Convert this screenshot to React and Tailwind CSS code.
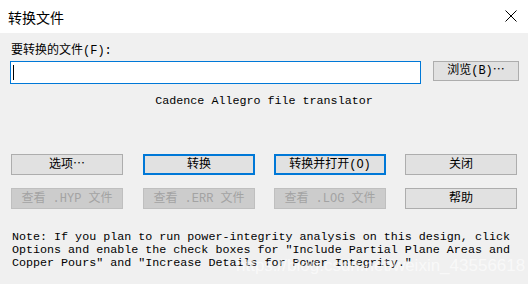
import React from "react";

const mono = { fontFamily: '"Liberation Mono", "Noto Sans CJK SC", monospace' };

function Btn({ children, variant = "normal", className = "" }) {
  const base = "h-[21px] w-[112px] flex items-center justify-center text-[12px] leading-none box-border";
  const styles = {
    normal: "bg-[#e1e1e1] border border-[#adadad] text-black",
    primary: "bg-[#e1e1e1] border-2 border-[#0078d7] text-black",
    disabled: "bg-[#cccccc] border border-[#bfbfbf] text-[#a3a3a3]",
  };
  return (
    <div className={`${base} ${styles[variant]} ${className}`} style={mono}>
      {children}
    </div>
  );
}

export default function App() {
  return (
    <div className="relative w-[528px] h-[284px] bg-[#f0f0f0] overflow-hidden" style={mono}>
      <div className="h-[33px] bg-white flex items-center justify-between pl-[8px] pr-[11px]">
        <span className="text-[14px] leading-none text-black" style={{ fontFamily: '"Noto Sans CJK SC", sans-serif' }}>
          转换文件
        </span>
        <svg width="12" height="12" viewBox="0 0 12 12" className="mb-[1px]">
          <path d="M0.5 0.5 L11.5 11.5 M11.5 0.5 L0.5 11.5" stroke="#000" strokeWidth="1" fill="none" />
        </svg>
      </div>

      <div className="pl-[11px] pt-[11px] text-[12px] leading-[14px] text-black">要转换的文件(F):</div>

      <div className="flex items-start mt-[3px] pl-[10px]">
        <div className="relative w-[411px] h-[23px] bg-white border border-[#0078d7] box-border">
          <span className="absolute left-[2px] top-[3px] w-[1px] h-[15px] bg-black" />
        </div>
        <Btn className="ml-[12px] !w-[86px] !h-[20px]">浏览(B)⋯</Btn>
      </div>

      <div className="text-center text-[11.7px] leading-[14px] text-black mt-[10px]">
        Cadence Allegro file translator
      </div>

      <div className="flex pl-[11px] mt-[46px]">
        <Btn>选项⋯</Btn>
        <Btn variant="primary" className="ml-[20px]">转换</Btn>
        <Btn variant="primary" className="ml-[19px]">转换并打开(O)</Btn>
        <Btn className="ml-[19px]">关闭</Btn>
      </div>
      <div className="flex pl-[11px] mt-[13px]">
        <Btn variant="disabled">查看 .HYP 文件</Btn>
        <Btn variant="disabled" className="ml-[20px]">查看 .ERR 文件</Btn>
        <Btn variant="disabled" className="ml-[19px]">查看 .LOG 文件</Btn>
        <Btn className="ml-[19px]">帮助</Btn>
      </div>

      <div className="pl-[12px] mt-[22px] text-[11.7px] leading-[13px] text-black whitespace-pre">
        {"Note: If you plan to run power-integrity analysis on this design, click\nOptions and enable the check boxes for \"Include Partial Plane Areas and\nCopper Pours\" and \"Increase Details for Power Integrity.\""}
      </div>

      <div
        className="absolute left-[236px] top-[257px] text-[17px] leading-none text-white/60 whitespace-nowrap"
        style={{ fontFamily: '"Liberation Sans", sans-serif' }}
      >
        https://blog.csdn.net/weixin_43556618
      </div>
    </div>
  );
}
